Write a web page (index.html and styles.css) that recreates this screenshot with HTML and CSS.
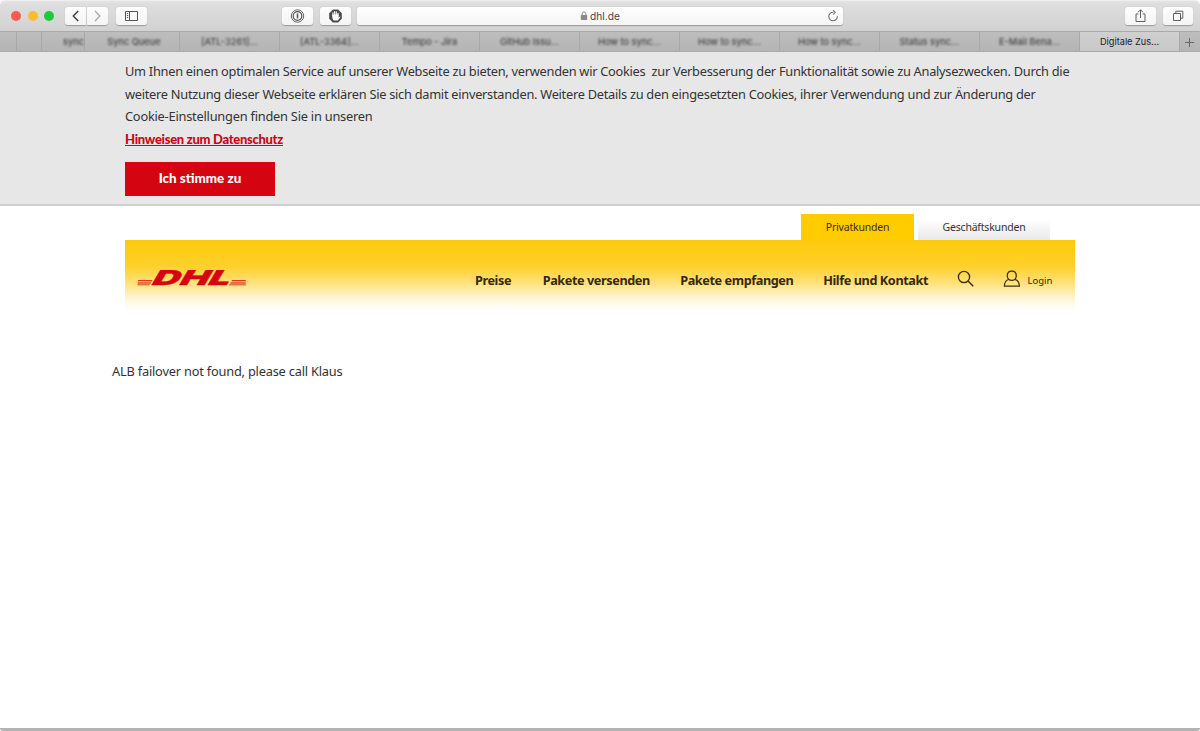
FILE: index.html
```html
<!DOCTYPE html>
<html lang="de">
<head>
<meta charset="utf-8">
<title>Digitale Zustellung</title>
<link rel="stylesheet" href="styles.css">
</head>
<body>
<div class="window">
  <div class="toolbar">
    <div class="lights"><i class="red"></i><i class="amber"></i><i class="green"></i></div>
    <div class="group history">
      <span class="btn back"><svg width="22" height="18" viewBox="0 0 22 18"><path d="M13.2 4 8.3 9l4.9 5" stroke="#3f3f3f" stroke-width="1.4"/></svg></span>
      <span class="btn fwd"><svg width="21" height="18" viewBox="0 0 21 18"><path d="M8 4l4.9 5L8 14" stroke="#a5a5a5" stroke-width="1.2"/></svg></span>
    </div>
    <span class="btn sidebar"><svg width="31" height="18" viewBox="0 0 31 18"><path d="M9.500 4.500h12v9h-12zM13.500 4.500v9M10.800 6.500h1.400M10.800 8.500h1.400M10.800 10.500h1.400" stroke="#555"/></svg></span>
    <span class="btn onepass"><svg width="31" height="18" viewBox="0 0 31 18"><g stroke="#555"><circle cx="15.500" cy="9" r="6.200" stroke-width=".9"/><circle cx="15.500" cy="9" r="4.300" stroke-width="1.200"/><path d="M15.500 6.500v5" stroke-width="1.500"/></g></svg></span>
    <span class="btn blocker"><svg width="31" height="18" viewBox="0 0 31 18"><path d="M12.900 2.500h5.200l3.700 3.700v5.500L18.100 15.500h-5.200l-3.700-3.800V6.200z" fill="#4b4b4b"/><path d="M12.900 9.300V5.800M14.600 8V4.500M16.300 8V4.700M18 9V6.200" stroke="#fff" stroke-width="1.150" stroke-linecap="round"/><path d="M12.400 7.500h6.200v3l1-.8c.8-.4.9.2.5.7l-2.300 3h-4c-1-.8-1.400-2-1.400-3z" fill="#fff"/></svg></span>
    <div class="address">
      <svg class="lock" width="8" height="10" viewBox="0 0 8 10"><rect x=".8" y="4" width="6.400" height="5" rx=".7" fill="#8a8a8a"/><path d="M2.200 4.500V2.800a1.800 1.800 0 0 1 3.600 0v1.700" stroke="#8a8a8a"/></svg>
      <span>dhl.de</span>
      <svg class="reload" width="12" height="12" viewBox="0 0 12 12"><path d="M6.300 2.200A4.300 4.300 0 1 0 10.400 6.300M6 .3l2.300 2-2.200 2.100" stroke="#707070" stroke-width="1.100"/></svg>
    </div>
    <span class="btn share"><svg width="31" height="18" viewBox="0 0 31 18"><path d="M13.400 7h-2.400v7.500h9V7h-2.400M15.500 11V2.800M13 5.300l2.500-2.500L18 5.300" stroke="#606060"/></svg></span>
    <span class="btn overview"><svg width="30" height="18" viewBox="0 0 30 18"><path d="M10.500 6.500h7v7h-7zM12.800 6.200V4.200h7v7h-2" stroke="#606060"/></svg></span>
  </div>

  <div class="tabs">
    <span class="tab pin-a"></span><span class="tab pin-b"></span>
    <span class="tab cut"><b>sync</b></span>
    <span class="tab second"><b>Sync Queue</b></span>
    <span class="tab"><b>[ATL-3261]…</b></span>
    <span class="tab"><b>[ATL-3364]…</b></span>
    <span class="tab"><b>Tempo - Jira</b></span>
    <span class="tab"><b>GitHub Issu…</b></span>
    <span class="tab"><b>How to sync…</b></span>
    <span class="tab"><b>How to sync…</b></span>
    <span class="tab"><b>How to sync…</b></span>
    <span class="tab"><b>Status sync…</b></span>
    <span class="tab"><b>E-Mail Bena…</b></span>
    <span class="tab active">Digitale Zus...</span>
    <span class="plus"><svg width="20" height="20" viewBox="0 0 20 20"><path d="M5 10.500h9M9.500 6v9" stroke="#666"/></svg></span>
  </div>

  <section class="cookie">
    <p><span class="l1">Um Ihnen einen optimalen Service auf unserer Webseite zu bieten, verwenden wir Cookies&nbsp; zur Verbesserung der Funktionalität sowie zu Analysezwecken. Durch die</span><br>
    <span class="l2">weitere Nutzung dieser Webseite erklären Sie sich damit einverstanden. Weitere Details zu den eingesetzten Cookies, ihrer Verwendung und zur Änderung der</span><br>
    <span class="l3">Cookie-Einstellungen finden Sie in unseren</span><br>
    <a class="privacy">Hinweisen zum Datenschutz</a></p>
    <button class="agree">Ich stimme zu</button>
  </section>

  <header class="site">
    <div class="audience"><span class="private">Privatkunden</span><span class="business">Geschäftskunden</span></div>
    <div class="bar">
      <svg class="logo" width="110" height="18" viewBox="0 0 110 18">
        <g fill="#d40511"><path d="M1.200 10.300h14.400l-.7 1H.600zM.6 12.400h13.700l-.7 1H.600zM.6 14.400h12.300l-.5.900H.600zM95.100 10.300h13.700v1H94.400zM93.800 12.400h15v1H93.100zM92.400 14.400h16.400v.9H91.800z"/>
        <text class="logo-text" transform="translate(14.500 15) skewX(-16)" x="0" y="0" textLength="78" lengthAdjust="spacingAndGlyphs">DHL</text></g>
      </svg>
      <nav><a class="n1">Preise</a><a class="n2">Pakete versenden</a><a class="n3">Pakete empfangen</a><a class="n4">Hilfe und Kontakt</a></nav>
      <svg class="search" width="18" height="18" viewBox="0 0 18 18"><circle cx="7" cy="7" r="5.600" stroke="#3b2f18" stroke-width="1.350"/><path d="M11 11l5.300 5.300" stroke="#3b2f18" stroke-width="1.500"/></svg>
      <svg class="user" width="18" height="18" viewBox="0 0 18 18"><path d="M8.800 1.200c-2.800 0-4.500 2-4.500 4.500s1.800 4.700 4.500 4.700 4.500-2.200 4.500-4.700-1.700-4.500-4.500-4.500zM5.500 9.500C2.800 10.300 1.500 12.600 1.400 16.200h15c-.1-3.600-1.500-5.900-4.300-6.700" stroke="#3b2f18" stroke-width="1.250"/></svg>
      <a class="login">Login</a>
    </div>
  </header>
  <main><span class="message">ALB failover not found, please call Klaus</span></main>
  <div class="bottom"></div>
</div>
</body>
</html>
```
FILE: styles.css
```css
* { box-sizing: border-box; }
body { margin: 0; background: #fff; font-family: "Noto Sans", sans-serif; color: #333; }
svg { display: block; fill: none; flex: none; }
.window { width: 1200px; height: 731px; display: flex; flex-direction: column; overflow: hidden; background: #fff; }
.toolbar { flex: none; height: 31px; display: flex; align-items: flex-start; background: linear-gradient(#e4e4e4 0, #dedede 3px, #d2d2d2); border-radius: 5px 5px 0 0; border-top: 1px solid #eee; padding-top: 6px; }
.lights { display: flex; gap: 6.700px; padding: 4px 0 0 11px; width: 65px; }
.lights i { width: 10px; height: 10px; border-radius: 50%; }
.red { background: #fb5b54; }
.amber { background: #fcbc2e; }
.green { background: #1fc93c; }
.history { display: flex; gap: 1px; width: 51px; }
.btn { flex: none; height: 18px; border-radius: 3px; background: linear-gradient(#fdfdfd, #f4f4f4); box-shadow: 0 .5px 1px rgba(0,0,0,.28); }
.back { border-radius: 3px 0 0 3px; width: 21px; }
.fwd { border-radius: 0 3px 3px 0; width: 21px; }
.sidebar { width: 31px; }
.onepass { width: 31px; margin-left: 135px; }
.blocker { width: 31px; margin-left: 7px; }
.address { width: 486px; height: 18px; margin-left: 6px; display: flex; align-items: center; background: linear-gradient(#fff, #f5f5f5); border-radius: 3px; box-shadow: 0 .5px 1px rgba(0,0,0,.28); font: 10.200px Inter, sans-serif; color: #444; padding-left: 223px; }
.lock { margin-right: 2px; margin-top: -1px; }
.reload { margin-left: auto; margin-right: 4px; }
.share { width: 31px; margin-left: 282px; }
.overview { width: 30px; margin-left: 7px; }

.tabs { flex: none; height: 21px; display: flex; background: linear-gradient(#bdbdbd, #b5b5b5); border-top: 1px solid #aaa; border-bottom: 1px solid #a9a9a9; font: 9.200px Inter, sans-serif; }
.tab { flex: none; width: 100px; border-right: 1px solid #a9a9a9; display: flex; justify-content: center; align-items: center; white-space: nowrap; }
.tab b { font-weight: 500; filter: blur(1.100px); color: #444; }
.pin-a { width: 17px; }
.pin-b { width: 25px; }
.cut { width: 43px; justify-content: flex-end; }
.second { width: 95px; padding-left: 4px; }
.active { background: linear-gradient(#d0d0d0, #c8c8c8); color: #222; }
.plus { width: 20px; }

.cookie { flex: none; height: 154px; padding: 8px 125px 0; background: #e7e7e7; border-bottom: 2px solid #cfcfcf; }
.cookie p { margin: 0; font-size: 12.800px; line-height: 22.500px; white-space: nowrap; color: #333; font-weight: 450; }
.l1, .l2 { letter-spacing: -.270px; }
.l3 { letter-spacing: -.220px; }
.privacy { font-family: Lato, sans-serif; font-size: 13px; font-weight: 900; letter-spacing: -.290px; color: #c90716; text-decoration: underline; }
.agree { display: block; width: 150px; height: 34px; margin: 12px 0 0; border: 0; background: #d40511; color: #fff; font: 900 13.400px Lato, sans-serif; padding: 0 0 2px; }

.site { flex: none; width: 950px; margin-left: 125px; padding-top: 8px; }
.audience { display: flex; gap: 4px; height: 26px; margin-left: 676px; font-size: 10.500px; letter-spacing: -.2px; line-height: 26px; text-align: center; }
.private { width: 113px; background: #fc0; color: #3b2f12; }
.business { width: 132px; background: linear-gradient(#fff 20%, #e9e9e9); }
.bar { height: 70px; display: flex; align-items: flex-start; background: linear-gradient(#fdca0a 0, #fed02c 38%, #ffe27d 62%, #fff6d8 84%, #fff 100%); color: #35290f; }
.logo { margin: 30px 0 0 12px; overflow: visible; }
.logo-text { font: italic 900 20.500px Inter, sans-serif; stroke: #d40511; stroke-width: .3px; }
nav { display: flex; width: 484px; margin: 30px 0 0 228px; font-weight: 700; font-size: 12.700px; letter-spacing: -.420px; line-height: 20px; white-space: nowrap; }
.n1 { width: 67.700px; }
.n2 { width: 137.500px; }
.n3 { width: 143px; }
.search { margin-top: 30px; margin-left: -2px; }
.user { margin: 30px 0 0 27.500px; }
.login { margin: 31px 0 0 7px; font-size: 9.500px; line-height: 19px; }
main { flex: 1; padding: 50px 0 0 112px; font-size: 12.800px; letter-spacing: -.200px; line-height: 22px; font-weight: 450; }
.bottom { flex: none; height: 3px; background: #b3b3b3; border-radius: 0 0 4px 4px; }
```
